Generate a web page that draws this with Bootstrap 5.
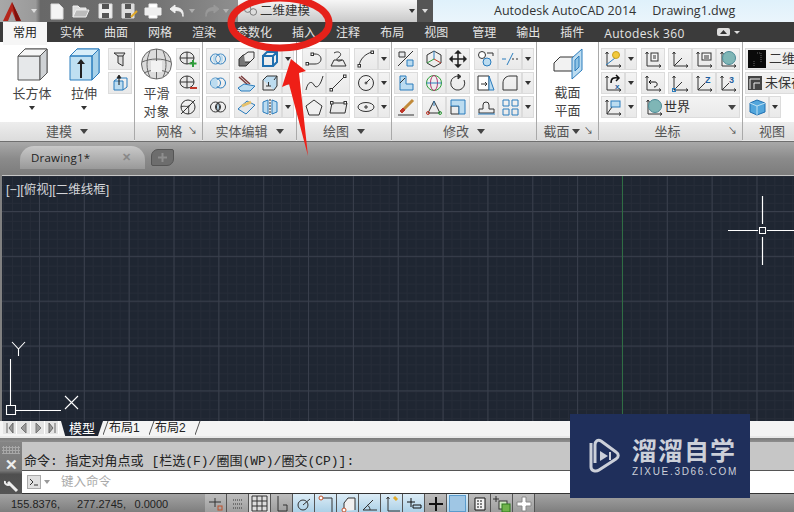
<!DOCTYPE html>
<html lang="zh">
<head>
    <meta charset="UTF-8">
    <title>Autodesk AutoCAD 2014</title>
    <link href="https://cdn.jsdelivr.net/npm/bootstrap@5.3.0/dist/css/bootstrap.min.css" rel="stylesheet">
    <style>
        html, body { width: 794px; height: 512px; overflow: hidden; }
        body { font-family: "Liberation Sans", "Noto Sans CJK SC", sans-serif; font-size: 12px; background: #808080; position: relative; }
        svg { display: block; fill: none; stroke: #333; stroke-width: 1; }
        .ac { stroke: #2a7cbd; }
        .fb { fill: #bcdcf0; }
        .fg { fill: #e4e6e8; }
        .fd { fill: #777; }
        /* title bar */
        .title-bar { height: 22px; background: linear-gradient(#dff1fb, #eaf5fc); }
        .qa-bar { width: 238px; padding-left: 2px; background: linear-gradient(90deg, #a8a8a8, #9a9a9a 15%, #686868 17%, #6f6f6f 60%, #8f8f8f); }
        .qa-btn { width: 24px; height: 22px; }
        .ws-combo { width: 179px; background: linear-gradient(#f6f6f6, #c9c9c9); color: #333; font-size: 12.5px; }
        .ws-icon { gap: 2px; padding-left: 5px; }
        .ws-drop { width: 16px; background: #555; }
        .app-name { font-family: "Open Sans", "Noto Sans", sans-serif; font-size: 12.5px; color: #333; margin-left: 61px; }
        .tri { display: inline-block; width: 0; height: 0; border-left: 3px solid transparent; border-right: 3px solid transparent; border-top: 4px solid #333; }
        .tri-w { border-top-color: #ddd; }
        .tri-lg { border-left-width: 4px; border-right-width: 4px; border-top-width: 5px; border-top-color: #444; }
        /* ribbon tabs */
        .rb-tabs { height: 20px; background: #3b3b3b; flex-wrap: nowrap; padding-left: 3px; }
        .rb-tabs .nav-link { padding: 0 10px; line-height: 23px; color: #e4e4e4; font-size: 12px; white-space: nowrap; }
        .rb-tabs .nav-link.is-on { background: #f6f6f6; color: #222; margin-right: 3px; }
        .rb-tabs .en { font-family: "Open Sans", sans-serif; font-size: 12px; letter-spacing: .35px; }
        .tab-push { margin-left: 4px; }
        .tab-view { margin-left: 22px; }
        /* ribbon */
        .rb-body { height: 99px; background: #fff; border-bottom: 1px solid #e8e8e8; }
        .rb-panel { border-right: 1px solid #a9a9a9; }
        .rb-main { height: 80px; padding-top: 6px; }
        .rb-title { height: 19px; background: linear-gradient(#ededed, #dcdcdc); color: #555; font-size: 13px; line-height: 19px; }
        .rb-launch { width: 14px; font-size: 9px; color: #444; }
        .w-jm { width: 135px; } .w-wg { width: 68px; } .w-st { width: 94px; } .w-ht { width: 95px; }
        .w-xg { width: 145px; } .w-jp { width: 62px; } .w-zb { width: 144px; } .w-vw { width: 51px; border-right: 0; overflow: hidden; }
        .pl-a { padding-left: 2px; } .pl-b { padding-left: 3px; } .pl-c { padding-left: 5px; } .pl-d { padding-left: 6px; }
        .tool-stack { display: flex; flex-direction: column; gap: 2px; }
        .tool { width: 24px; height: 22px; background: linear-gradient(#f4f4f4, #e9e9e9); box-shadow: inset 0 0 0 1px #dcdcdc; display: flex; align-items: center; justify-content: center; flex: none; }
        .tool-d { width: 12px; height: 22px; background: linear-gradient(#f4f4f4, #e9e9e9); box-shadow: inset 0 0 0 1px #dcdcdc; display: flex; align-items: center; justify-content: center; flex: none; }
        .tool-wide { width: 99px; justify-content: flex-start; padding-left: 3px; color: #333; font-size: 13px; }
        .tool-cb { width: 62px; justify-content: flex-start; padding-left: 3px; gap: 3px; color: #333; font-size: 13px; white-space: nowrap; overflow: hidden; }
        .gap-3px { margin-left: 3px; }
        .big-tool { width: 48px; flex: none; color: #444; font-size: 13px; line-height: 17px; text-align: center; white-space: nowrap; }
        .big-first { margin-left: 8px; }
        .sec-lbl { line-height: 18px; color: #444; font-size: 13px; text-align: center; }
        /* drawing tabs */
        .file-bar { height: 34px; background: linear-gradient(#a9a9a9, #8b8b8b 50%, #7c7c7c); padding: 4px 0 0 20px; border-top: 1px solid #6f6f6f; }
        .file-tab { width: 125px; height: 23px; background: linear-gradient(#c9c9c9, #999); border-radius: 14px 14px 0 0; color: #222; font-size: 11.5px; letter-spacing: .2px; padding: 0 14px 0 11px; font-family: "Open Sans", sans-serif; }
        .file-x { color: #888; font-weight: 700; font-size: 11px; }
        .file-add { width: 23px; height: 17px; background: #6d6d6d; border: 1px solid #555; border-radius: 7px 2px 7px 2px; margin: 3px 0 0 6px; }
        /* canvas */
        .model-view { height: 246px; margin-left: 2px; position: relative; overflow: hidden; border-top: 1px solid #c6c6c6; background-color: #1f2632;
            background-image: linear-gradient(90deg, #393f4c 1px, transparent 1px), linear-gradient(#393f4c 1px, transparent 1px), linear-gradient(90deg, #262c38 1px, transparent 1px), linear-gradient(#262c38 1px, transparent 1px);
            background-size: 44.85px 44.85px, 44.85px 44.85px, 8.97px 8.97px, 8.97px 8.97px;
            background-position: 37px 35px, 37px 35px, 1px 0, 1px 0; }
        .view-lbl { position: absolute; left: 4px; top: 5px; color: #d4d6da; font-size: 12.5px; white-space: nowrap; }
        .view-art { position: absolute; left: -2px; top: -1px; stroke: #fff; }
        /* layout tabs */
        .layout-bar { height: 15px; background: #f4f4f4; padding-left: 3px; }
        .lay-nav { width: 14px; height: 13px; display: flex; align-items: center; justify-content: center; background: #e4e4e4; border-right: 1px solid #fff; }
        .lay-tab { color: #222; font-size: 12px; line-height: 15px; width: 46px; display: flex; white-space: nowrap; font-family: "Liberation Sans", "Noto Sans CJK SC", sans-serif; }
        .lay-slash { width: 6px; flex: none; stroke: #555; }
        .lay-tab-on { background: #1f2632; color: #fff; width: 42px; margin-left: 2px; clip-path: polygon(0 0, 100% 0, 88% 100%, 10% 100%); font-size: 13px; justify-content: center; }
        .band-a { height: 2px; background: #e9e9e9; }
        .band-b { height: 4px; background: linear-gradient(#7b7b7b, #8d8d8d); }
        /* command line */
        .cmd-shell { height: 52px; }
        .cmd-grip { width: 22px; height: 52px; overflow: hidden; background: linear-gradient(#858585, #777 55%, #4f4f4f 62%, #555); }
        .grip-dots { height: 8px; margin: 4px 2px 0; background-image: radial-gradient(#a8a8a8 1px, transparent 1.2px); background-size: 3px 3px; }
        .cmd-x { color: #eee; font-size: 15px; font-weight: 700; line-height: 15px; margin-top: 3px; }
        .cmd-wrench { margin-top: 6px; }
        .cmd-out { height: 29px; background: #c6c6c6; border-bottom: 1px solid #555; font-family: "Liberation Mono", "Noto Sans CJK SC", monospace; font-size: 13px; color: #222; padding: 11px 0 0 2px; line-height: 17px; white-space: pre; }
        .cmd-in { height: 23px; background: #fff; border-bottom: 1px solid #333; padding-left: 5px; color: #aaa; font-size: 12.5px; gap: 3px; }
        .cmd-prompt { width: 14px; height: 14px; background: #e0e0e0; border: 1px solid #aaa; }
        /* status bar */
        .status-bar { height: 19px; background: linear-gradient(#a3a3a3, #7c7c7c); }
        .coords { width: 205px; padding-left: 11px; font-size: 11px; color: #222; white-space: pre; word-spacing: 5.5px; line-height: 20px; }
        .st-btn { width: 22px; height: 19px; border-right: 1px solid #555; background: linear-gradient(#bdbdbd, #9c9c9c); display: flex; align-items: center; justify-content: center; overflow: hidden; }
        .st-on { background: linear-gradient(#dcecf6, #a9cfe6); }
        .st-hi { background: #dcdcdc; }
        /* over the page */
        .mark-up { position: absolute; left: 0; top: 0; z-index: 5; }
        .logo-box { position: absolute; left: 570px; top: 414px; width: 180px; height: 84px; background: #1f2f5b; z-index: 6; color: #ccd0d9; }
        .logo-txt { margin-left: 12px; }
        .logo-zh { font-family: "Noto Sans CJK SC", sans-serif; font-size: 25px; line-height: 28px; font-weight: 700; letter-spacing: 1px; white-space: nowrap; }
        .logo-en { font-family: "Liberation Sans", sans-serif; font-size: 10px; line-height: 11px; letter-spacing: 1.7px; margin-top: 3px; white-space: nowrap; }
    </style>
</head>
<body>
    <svg width="0" height="0" class="position-absolute">
        <defs>
            <g id="axis"><path d="M4 2v14h14M4 2l-1.500 2M4 2l1.500 2M18 16l-2-1.500M18 16l-2 1.500"/></g>
            <g id="rings"><circle cx="7.500" cy="9" r="5" class="ac"/><circle cx="12.500" cy="9" r="5" class="ac"/></g>
        </defs>
    </svg>

    <!-- title bar -->
    <div class="title-bar d-flex align-items-stretch">
        <div class="qa-bar d-flex align-items-center">
            <svg width="21" height="20" viewBox="0 0 21 20" style="stroke:none"><path d="M1 20 10 1l9 19h-5l-4-10-4 10z" fill="#b5261c"/><path d="M10 1l9 19h-5z" fill="#7f120c"/></svg>
            <span class="tri tri-w ms-2 me-2"></span>
            <span class="qa-btn d-flex align-items-center justify-content-center"><svg width="16" height="17" viewBox="0 0 16 17"><path d="M2 1h8l4 4v11H2z" fill="#f4f4f4" stroke="#ddd"/></svg></span>
            <span class="qa-btn d-flex align-items-center justify-content-center"><svg width="18" height="16" viewBox="0 0 18 16"><path d="M1 14V3h5l2 2h6v2" fill="#ddd" stroke="#eee"/><path d="M1 14l3-7h13l-3 7z" fill="#bbb" stroke="#eee"/></svg></span>
            <span class="qa-btn d-flex align-items-center justify-content-center"><svg width="15" height="16" viewBox="0 0 15 16"><path d="M1 1h13v14H1z" fill="#eee" stroke="#ddd"/><path d="M4 1h7v5H4zM4 10h7v5H4z" fill="#555" stroke="none"/></svg></span>
            <span class="qa-btn d-flex align-items-center justify-content-center"><svg width="17" height="16" viewBox="0 0 17 16"><path d="M1 1h12v14H1z" fill="#ddd" stroke="#ddd"/><path d="M4 1h6v5H4zM4 10h6v5H4z" fill="#555" stroke="none"/><path d="M10 14l6-6" stroke="#e0a92a" stroke-width="2"/></svg></span>
            <span class="qa-btn d-flex align-items-center justify-content-center"><svg width="18" height="16" viewBox="0 0 18 16"><path d="M5 1h8v4H5zM5 11h8v4H5z" fill="#fff" stroke="#eee"/><path d="M1 5h16v7H1z" fill="#eee" stroke="#eee"/></svg></span>
            <span class="qa-btn d-flex align-items-center justify-content-center"><svg width="17" height="14" viewBox="0 0 17 14"><path d="M6 1 1 5l5 4V6.500c5 0 7 1 8 6 1-6-2-9-8-9z" fill="#eee" stroke="#eee"/></svg></span>
            <span class="tri tri-w" style="opacity:.5"></span>
            <span class="qa-btn d-flex align-items-center justify-content-center ms-1"><svg width="17" height="14" viewBox="0 0 17 14"><path d="M11 1l5 4-5 4V6.500c-5 0-7 1-8 6-1-6 2-9 8-9z" fill="#999" stroke="#999"/></svg></span>
            <span class="tri tri-w" style="opacity:.5"></span>
        </div>
        <div class="ws-combo d-flex align-items-center justify-content-between">
            <span class="d-flex align-items-center ws-icon">
                <svg width="15" height="14" viewBox="0 0 16 14" style="stroke:#777"><circle cx="5" cy="5" r="3.500" fill="#ddd"/><circle cx="11" cy="8" r="3.500" fill="#ddd"/></svg>二维建模
            </span>
            <span class="tri" style="margin-right:2px"></span>
        </div>
        <div class="ws-drop d-flex align-items-center justify-content-center"><span class="tri tri-w"></span></div>
        <div class="app-name d-flex align-items-center gap-3"><span>Autodesk AutoCAD 2014</span><span>Drawing1.dwg</span></div>
    </div>

    <!-- ribbon tabs -->
    <ul class="nav rb-tabs">
        <li class="nav-item"><a class="nav-link is-on" href="#">常用</a></li>
        <li class="nav-item"><a class="nav-link" href="#">实体</a></li>
        <li class="nav-item"><a class="nav-link" href="#">曲面</a></li>
        <li class="nav-item"><a class="nav-link" href="#">网格</a></li>
        <li class="nav-item"><a class="nav-link" href="#">渲染</a></li>
        <li class="nav-item"><a class="nav-link" href="#">参数化</a></li>
        <li class="nav-item"><a class="nav-link" href="#">插入</a></li>
        <li class="nav-item"><a class="nav-link" href="#">注释</a></li>
        <li class="nav-item"><a class="nav-link" href="#">布局</a></li>
        <li class="nav-item"><a class="nav-link" href="#">视图</a></li>
        <li class="nav-item tab-push"><a class="nav-link" href="#">管理</a></li>
        <li class="nav-item"><a class="nav-link" href="#">输出</a></li>
        <li class="nav-item"><a class="nav-link" href="#">插件</a></li>
        <li class="nav-item"><a class="nav-link en" href="#">Autodesk 360</a></li>
        <li class="nav-item d-flex align-items-center gap-1 tab-view"><svg width="13" height="8" viewBox="0 0 13 8" style="stroke:none"><rect width="13" height="8" rx="2" fill="#ddd"/><path d="M3 6l3.500-4L10 6z" fill="#333"/></svg><span class="tri tri-w" style="border-top-width:3px"></span></li>
    </ul>

    <!-- ribbon panels -->
    <div class="rb-body d-flex">
        <!-- 建模 -->
        <section class="rb-panel w-jm">
            <div class="rb-main d-flex">
                <div class="big-tool big-first d-flex flex-column align-items-center">
                    <svg width="31" height="33" viewBox="0 0 31 33" style="stroke:#555"><path d="M1 8 8 1h22v24l-7 7H1z" fill="#e6e8ea"/><path d="M1 8h22v24" fill="none"/><path d="M23 8l7-7v24l-7 7z" fill="#cfd2d5"/><path d="M1 8 8 1h22l-7 7z" fill="#f6f6f6"/></svg>
                    <span class="mt-1">长方体</span><span class="tri mt-1"></span>
                </div>
                <div class="big-tool ms-1 d-flex flex-column align-items-center">
                    <svg width="31" height="33" viewBox="0 0 31 33" style="stroke:#2a7cbd"><path d="M1 8 8 1h22v24l-7 7H1z" fill="#bfe0f2"/><path d="M23 8l7-7v24l-7 7z" fill="#a9d2e9"/><path d="M1 8 8 1h22l-7 7z" fill="#d8eef9"/><path d="M1 8h22v24" fill="none"/><path d="M12 30V15" stroke="#222" stroke-width="2"/><path d="M8 16l4-5 4 5z" fill="#222" stroke="none"/></svg>
                    <span class="mt-1">拉伸</span><span class="tri mt-1"></span>
                </div>
                <div class="tool-stack">
                    <span class="tool"><svg width="16" height="17" viewBox="0 0 16 17"><path d="M2 2h11l-2 3v10L6 12V5z" fill="#ddd"/><path d="M6 5h5"/></svg></span>
                    <span class="tool"><svg width="18" height="18" viewBox="0 0 18 18"><path d="M3 7h9v9H3z" class="ac fb"/><path d="M3 7l4-3h9v9l-4 3" class="ac"/><path d="M8 11V2" stroke="#111"/><path d="M6 4l2-3 2 3z" fill="#111"/></svg></span>
                </div>
            </div>
            <div class="rb-title d-flex justify-content-center align-items-center gap-2"><span>建模</span><span class="tri tri-lg"></span></div>
        </section>
        <!-- 网格 -->
        <section class="rb-panel w-wg">
            <div class="rb-main d-flex pl-d">
                <div class="d-flex flex-column align-items-center" style="width:31px">
                    <svg width="31" height="33" viewBox="0 0 31 33" style="stroke:#666"><circle cx="15.500" cy="16" r="15" fill="#dcdcdc"/><path d="M1 14c9-4 20-4 29 0M3 25c8-4 17-4 25 0M15.500 1v30M9 3c-4 9-4 18 0 26M22 3c4 9 4 18 0 26"/><path d="M10 13h11v11H10z" fill="#f2f2f2" stroke="none"/></svg>
                    <span class="sec-lbl mt-1">平滑</span><span class="sec-lbl">对象</span>
                </div>
                <div class="tool-stack ms-1">
                    <span class="tool"><svg width="19" height="18" viewBox="0 0 19 18"><ellipse cx="8" cy="8" rx="7" ry="6" fill="#e8e8e8"/><path d="M1 8h14M8 2v12"/><path d="M14 10v7M10.500 13.500h7" stroke="#2e9e3a" stroke-width="2"/></svg></span>
                    <span class="tool"><svg width="19" height="18" viewBox="0 0 19 18"><ellipse cx="8" cy="8" rx="7" ry="6" fill="#e8e8e8"/><path d="M1 8h14M8 2v12"/><path d="M11 14h7" stroke="#c0392b" stroke-width="2"/></svg></span>
                    <span class="tool"><svg width="18" height="18" viewBox="0 0 18 18"><circle cx="9" cy="9" r="7"/><path d="M2 16 16 2M2 9c3-2 6 1 9-2M9 16c2-3-1-6 2-9"/></svg></span>
                </div>
            </div>
            <div class="rb-title d-flex align-items-center ps-3"><span class="flex-fill text-center">网格</span><span class="rb-launch">↘</span></div>
        </section>
        <!-- 实体编辑 -->
        <section class="rb-panel w-st">
            <div class="rb-main tool-stack pl-b">
                <div class="d-flex">
                    <span class="tool"><svg width="20" height="18" viewBox="0 0 20 18"><use href="#rings"/><path d="M7.500 4c-3 1-4 7 0 10M12.500 4c3 1 4 7 0 10" fill="#bcdcf0" stroke="none"/></svg></span>
                    <span class="tool ms-1"><svg width="18" height="17" viewBox="0 0 18 17"><path d="M2 8l4-4h7v7l-4 4H2z" fill="#777"/><path d="M7 4l4-3h6v6l-4 4H8" fill="#eee"/></svg></span>
                    <span class="tool"><svg width="18" height="18" viewBox="0 0 18 18" style="stroke:#1f6fb0;stroke-width:2"><path d="M2 6h10v10H2zM2 6l4-4h10v10l-4 4M12 6l4-4"/></svg></span>
                    <span class="tool-d"><span class="tri"></span></span>
                </div>
                <div class="d-flex">
                    <span class="tool"><svg width="20" height="18" viewBox="0 0 20 18"><use href="#rings"/><path d="M5 5c-3 2-3 6 0 8l2.500 1c3-2 3-8 0-10z" fill="#bcdcf0" stroke="none"/></svg></span>
                    <span class="tool ms-1"><svg width="19" height="17" viewBox="0 0 19 17"><path d="M2 2l9 8M4 1l9 8" stroke="#7a3b3b" stroke-width="1.500"/><path d="M1 13l6-4 11 2-5 5H4z" class="ac fb"/></svg></span>
                    <span class="tool"><svg width="18" height="18" viewBox="0 0 18 18"><path d="M2 6h11v10H2z" class="fg"/><path d="M2 6l4-4h10v10l-3 4M13 6l3-4" class="fb"/><path d="M5 12h5M7.500 12V8"/></svg></span>
                    <span class="tool-d"><span class="tri"></span></span>
                </div>
                <div class="d-flex">
                    <span class="tool"><svg width="20" height="18" viewBox="0 0 20 18"><circle cx="7.500" cy="9" r="5"/><circle cx="12.500" cy="9" r="5"/><path d="M10 5c-2 2-2 6 0 8 2-2 2-6 0-8z" class="fb"/></svg></span>
                    <span class="tool ms-1"><svg width="19" height="16" viewBox="0 0 19 16"><path d="M1 10 10 2l8 4-9 9z" class="ac fg"/><path d="M5 7l9-4" stroke="#e6c06a" stroke-width="3"/></svg></span>
                    <span class="tool"><svg width="18" height="18" viewBox="0 0 18 18"><path d="M9 1v16" stroke-dasharray="2 1"/><path d="M2 4l5-2v14l-5-2zM16 4l-5-2v14l5-2z" class="ac fb"/></svg></span>
                    <span class="tool-d"><span class="tri"></span></span>
                </div>
            </div>
            <div class="rb-title d-flex justify-content-center align-items-center gap-2"><span>实体编辑</span><span class="tri tri-lg"></span></div>
        </section>
        <!-- 绘图 -->
        <section class="rb-panel w-ht">
            <div class="rb-main tool-stack pl-c">
                <div class="d-flex">
                    <span class="tool"><svg width="19" height="16" viewBox="0 0 19 16"><path d="M2 13h8c8 0 8-10 0-10H7" /><rect x="1" y="11.500" width="2.500" height="2.500" fill="#fff"/><rect x="6" y="2" width="2.500" height="2.500" fill="#fff"/></svg></span>
                    <span class="tool"><svg width="19" height="18" viewBox="0 0 19 18"><path d="M5 3c5-3 9 1 5 4-4 2-2 6 3 3M2 16l3-6h9l3 6z"/></svg></span>
                    <span class="tool ms-1"><svg width="18" height="18" viewBox="0 0 18 18"><path d="M2 16C3 9 8 4 15 2"/><rect x="1" y="14.500" width="2.500" height="2.500" fill="#fff"/><rect x="14" y="1" width="2.500" height="2.500" fill="#fff"/></svg></span>
                    <span class="tool-d"><span class="tri"></span></span>
                </div>
                <div class="d-flex">
                    <span class="tool"><svg width="19" height="18" viewBox="0 0 19 18" stroke-width="1.500"><path d="M1 16C3 7 7 7 9 11s6 2 9-9"/></svg></span>
                    <span class="tool"><svg width="18" height="18" viewBox="0 0 18 18"><path d="M2 16 16 2"/><rect x="1" y="14.500" width="2.500" height="2.500" fill="#fff"/><rect x="14.500" y="1" width="2.500" height="2.500" fill="#fff"/></svg></span>
                    <span class="tool ms-1"><svg width="18" height="18" viewBox="0 0 18 18"><circle cx="9" cy="9" r="7.500"/><path d="M9 9l4-4"/><circle cx="9" cy="9" r="1"/></svg></span>
                    <span class="tool-d"><span class="tri"></span></span>
                </div>
                <div class="d-flex">
                    <span class="tool"><svg width="18" height="17" viewBox="0 0 18 17"><path d="M9 1l8 6-3 9H4L1 7z" fill="#f0f0f0"/></svg></span>
                    <span class="tool"><svg width="19" height="15" viewBox="0 0 19 15"><path d="M3 3h15l-2 10H1z" fill="#e8e8e8"/><rect x="1.500" y="1.500" width="2.500" height="2.500" fill="#fff"/><rect x="15" y="1.500" width="2.500" height="2.500" fill="#fff"/></svg></span>
                    <span class="tool ms-1"><svg width="18" height="14" viewBox="0 0 18 14"><ellipse cx="9" cy="7" rx="8" ry="4.500"/><path d="M7 7h4M9 5v4"/></svg></span>
                    <span class="tool-d"><span class="tri"></span></span>
                </div>
            </div>
            <div class="rb-title d-flex justify-content-center align-items-center gap-2"><span>绘图</span><span class="tri tri-lg"></span></div>
        </section>
        <!-- 修改 -->
        <section class="rb-panel w-xg">
            <div class="rb-main tool-stack pl-a">
                <div class="d-flex">
                    <span class="tool"><svg width="18" height="18" viewBox="0 0 18 18"><path d="M1 16 16 1"/><path d="M2 2h6v5H2z" class="fg"/><path d="M10 10h6v6h-6z" class="ac fb"/></svg></span>
                    <span class="tool ms-1"><svg width="18" height="18" viewBox="0 0 18 18"><path d="M9 1l7 4v8l-7 4-7-4V5z"/><path d="M9 9V1" stroke="#2a7cbd"/><path d="M9 9l-7 4" stroke="#2e9e3a"/><path d="M9 9l7 4" stroke="#c0392b"/></svg></span>
                    <span class="tool"><svg width="18" height="18" viewBox="0 0 18 18" style="stroke:#222;stroke-width:1.500"><path d="M9 2v14M2 9h14M9 1l-2 2h4zM9 17l-2-2h4zM1 9l2-2v4zM17 9l-2-2v4z"/></svg></span>
                    <span class="tool ms-1"><svg width="18" height="18" viewBox="0 0 18 18"><circle cx="5" cy="5" r="3.500" fill="#fff"/><circle cx="10" cy="12" r="4" class="ac fb"/><path d="M10 3h6v3"/></svg></span>
                    <span class="tool"><svg width="18" height="16" viewBox="0 0 18 16"><path d="M1 8h4M6 14l6-12" class="ac"/><path d="M11 8h2M15 8h2" /></svg></span>
                    <span class="tool-d"><span class="tri"></span></span>
                </div>
                <div class="d-flex">
                    <span class="tool"><svg width="18" height="18" viewBox="0 0 18 18"><path d="M3 2h6v8h7v6H3z" class="ac fb"/><path d="M3 9l5-5"/></svg></span>
                    <span class="tool ms-1"><svg width="18" height="18" viewBox="0 0 18 18"><circle cx="9" cy="9" r="7.500" stroke="#2e9e3a"/><ellipse cx="9" cy="9" rx="3.500" ry="7.500" stroke="#b3356b"/><path d="M1.500 9h15" stroke="#2a7cbd"/></svg></span>
                    <span class="tool"><svg width="18" height="18" viewBox="0 0 18 18" stroke-width="1.500"><path d="M15 6a7 7 0 1 1-4-3.500"/><path d="M9 0l3 2.500L9 5z" fill="#333"/></svg></span>
                    <span class="tool ms-1"><svg width="18" height="18" viewBox="0 0 18 18"><path d="M1 2h11v14H1z" fill="#fff"/><path d="M12 2l5 14h-5z" class="ac fb"/><path d="M4 10h6M8 8l2 2-2 2"/></svg></span>
                    <span class="tool"><svg width="18" height="18" viewBox="0 0 18 18"><path d="M2 16V9c0-4 3-7 7-7h7v14z"/></svg></span>
                    <span class="tool-d"><span class="tri"></span></span>
                </div>
                <div class="d-flex">
                    <span class="tool"><svg width="18" height="18" viewBox="0 0 18 18"><path d="M7 11 16 2" stroke="#c08a3a" stroke-width="3"/><path d="M3 13l3-3 2 2-3 3z" fill="#c0392b" stroke="#c0392b"/><path d="M1 17h16"/></svg></span>
                    <span class="tool ms-1"><svg width="18" height="16" viewBox="0 0 18 16"><path d="M9 2 3 14h12z"/><path d="M9 2v5" stroke="#2a7cbd"/><circle cx="3" cy="14" r="1.500" stroke="#c0392b"/><circle cx="15" cy="14" r="1.500" stroke="#2e9e3a"/></svg></span>
                    <span class="tool"><svg width="18" height="18" viewBox="0 0 18 18"><path d="M2 8h8v8H2z"/><path d="M2 2h14v14h-6V8H2z" class="ac fb"/></svg></span>
                    <span class="tool ms-1"><svg width="19" height="16" viewBox="0 0 19 16" stroke-width="1.500"><path d="M2 14h15v-4h-5V6a3 3 0 0 0-6 0v4H2z"/><path d="M1 15h17" class="ac"/></svg></span>
                    <span class="tool"><svg width="17" height="17" viewBox="0 0 17 17"><path d="M1 1h6v6H1zM10 1h6v6h-6zM1 10h6v6H1zM10 10h6v6h-6z" class="ac"/></svg></span>
                    <span class="tool-d"><span class="tri"></span></span>
                </div>
            </div>
            <div class="rb-title d-flex justify-content-center align-items-center gap-2"><span>修改</span><span class="tri tri-lg"></span></div>
        </section>
        <!-- 截面 -->
        <section class="rb-panel w-jp">
            <div class="rb-main d-flex flex-column align-items-center">
                <svg width="30" height="32" viewBox="0 0 30 32"><path d="M1 15l6-6h14v14H1z" fill="#f2f2f2"/><path d="M19 10 29 1v21l-10 9z" class="ac fb" stroke="#555"/><path d="M22 12l4-4v11l-4 4z" fill="#8ec3e4" stroke="#2a7cbd"/></svg>
                <span class="sec-lbl mt-1">截面</span><span class="sec-lbl">平面</span>
            </div>
            <div class="rb-title d-flex align-items-center ps-1"><span class="flex-fill text-center">截面</span><span class="tri tri-lg"></span><span class="rb-launch ms-1">↘</span></div>
        </section>
        <!-- 坐标 -->
        <section class="rb-panel w-zb">
            <div class="rb-main tool-stack pl-a">
                <div class="d-flex">
                    <span class="tool"><svg width="20" height="18" viewBox="0 0 20 18"><use href="#axis"/><path d="M3 15 12 8" class="ac"/><circle cx="13" cy="5" r="3.500" fill="#f2c93b" stroke="#c9a020"/></svg></span>
                    <span class="tool-d"><span class="tri"></span></span>
                    <span class="tool ms-1"><svg width="20" height="18" viewBox="0 0 20 18"><use href="#axis"/><rect x="8" y="3" width="7" height="8" fill="#f4f4f4"/><path d="M10 6h3M10 8h3"/></svg></span>
                    <span class="tool gap-3px"><svg width="20" height="18" viewBox="0 0 20 18"><use href="#axis"/><path d="M4 16 12 8"/></svg></span>
                    <span class="tool"><svg width="20" height="18" viewBox="0 0 20 18"><use href="#axis"/><rect x="8" y="3" width="9" height="7" fill="#f4f4f4"/><path d="M10 6h5M10 8h5"/></svg></span>
                    <span class="tool"><svg width="20" height="18" viewBox="0 0 20 18"><use href="#axis"/><circle cx="11" cy="8" r="6.500" fill="#7fb6b6" stroke="#4b8a96"/></svg></span>
                </div>
                <div class="d-flex">
                    <span class="tool"><svg width="20" height="18" viewBox="0 0 20 18"><use href="#axis"/><path d="M8 9c0-5 3-6 7-5M13 1l3 3-3 3" stroke="#111" stroke-width="1.500"/><text x="12" y="15" font-size="8" font-weight="700" fill="#1f5f9e" stroke="none">x</text></svg></span>
                    <span class="tool-d"><span class="tri"></span></span>
                    <span class="tool ms-1"><svg width="20" height="18" viewBox="0 0 20 18"><use href="#axis"/><path d="M8 6l-2 2 2 2M6 8h6c3 0 3 5-1 5" stroke="#111"/></svg></span>
                    <span class="tool gap-3px"><svg width="20" height="18" viewBox="0 0 20 18"><use href="#axis"/><path d="M4 16 12 8"/><rect x="2.500" y="14.500" width="3" height="3" class="ac"/></svg></span>
                    <span class="tool"><svg width="20" height="18" viewBox="0 0 20 18"><use href="#axis"/><path d="M4 16l7-7"/><text x="11" y="9" font-size="9" font-weight="700" fill="#1f5f9e" stroke="none">Z</text></svg></span>
                    <span class="tool"><svg width="20" height="18" viewBox="0 0 20 18"><use href="#axis"/><path d="M4 16l7-7"/><text x="11" y="9" font-size="9" font-weight="700" fill="#1f5f9e" stroke="none">3</text></svg></span>
                </div>
                <div class="d-flex">
                    <span class="tool"><svg width="20" height="18" viewBox="0 0 20 18"><use href="#axis"/><path d="M4 16 9 9"/><rect x="8" y="3" width="9" height="6" class="ac fb"/></svg></span>
                    <span class="tool-d"><span class="tri"></span></span>
                    <span class="tool tool-wide ms-1"><svg width="20" height="18" viewBox="0 0 20 18"><use href="#axis"/><circle cx="11" cy="8" r="6.500" fill="#7fb6b6" stroke="#4b8a96"/></svg>世界<span class="tri tri-lg ms-auto me-1"></span></span>
                </div>
            </div>
            <div class="rb-title d-flex align-items-center ps-2"><span class="flex-fill text-center">坐标</span><span class="rb-launch">↘</span></div>
        </section>
        <!-- 视图 -->
        <section class="rb-panel w-vw">
            <div class="rb-main tool-stack pl-a">
                <span class="tool tool-cb"><svg width="18" height="18" viewBox="0 0 18 18" style="stroke:#666;flex:none"><rect width="18" height="18" fill="#0a0a0a" stroke="none"/><path d="M6 16v-5M13 12V3H8" stroke-dasharray="1 1"/></svg>二维线框</span>
                <span class="tool tool-cb"><svg width="14" height="14" viewBox="0 0 14 14" style="stroke:#eee;flex:none"><rect width="14" height="14" fill="#444" stroke="none"/><path d="M2 13V3h10M6 13V7h6"/></svg>未保存视图</span>
                <div class="d-flex">
                    <span class="tool"><svg width="17" height="17" viewBox="0 0 17 17"><path d="M1 4l7-3 8 3v9l-8 3-7-3z" fill="#52a6dc" stroke="#1f6fb0"/><path d="M8 7v9M1 4l7 3 8-3" stroke="#bfe0f2"/></svg></span>
                    <span class="tool-d"><span class="tri"></span></span>
                </div>
            </div>
            <div class="rb-title ps-3 text-nowrap">视图</div>
        </section>
    </div>

    <!-- document tabs -->
    <div class="file-bar d-flex align-items-start">
        <div class="file-tab d-flex align-items-center justify-content-between"><span>Drawing1*</span><span class="file-x">✕</span></div>
        <div class="file-add d-flex align-items-center justify-content-center"><svg width="9" height="9" viewBox="0 0 9 9" style="stroke:#8e8e8e;stroke-width:2"><path d="M4.500 0v9M0 4.500h9"/></svg></div>
    </div>

    <!-- model space -->
    <div class="model-view">
        <div class="view-lbl">[−][俯视][二维线框]</div>
        <svg class="view-art" width="794" height="246" viewBox="0 176 794 246">
            <path d="M622.500 176v246" stroke="#2f6e44"/>
            <path d="M762.500 197v28M762.500 238v28M728 231.500h30M767 231.500h27" stroke-width="1.200"/>
            <rect x="759.500" y="228.500" width="6" height="6"/>
            <path d="M10.500 360v46M15 411.500h46M6.500 406.500h9v9h-9zM65 397l13 13M78 397l-13 13M12 343l6.500 7 6.500-7M18.500 350v7" stroke-width="1.100"/>
        </svg>
    </div>

    <!-- layout tabs -->
    <div class="layout-bar d-flex align-items-start">
        <span class="lay-nav"><svg width="8" height="10" viewBox="0 0 8 10" style="stroke:#666"><path d="M1 0v10M7 0 3 5l4 5z" fill="#999"/></svg></span>
        <span class="lay-nav"><svg width="8" height="10" viewBox="0 0 8 10" style="stroke:#777"><path d="M6 0 1 5l5 5z" fill="#999"/></svg></span>
        <span class="lay-nav"><svg width="8" height="10" viewBox="0 0 8 10" style="stroke:#777"><path d="M2 0l5 5-5 5z" fill="#999"/></svg></span>
        <span class="lay-nav"><svg width="8" height="10" viewBox="0 0 8 10" style="stroke:#666"><path d="M7 0v10M1 0l4 5-4 5z" fill="#999"/></svg></span>
        <span class="lay-tab lay-tab-on">模型</span>
        <span class="lay-tab"><svg class="lay-slash" width="6" height="15" viewBox="0 0 6 15"><path d="M0 14 5 0"/></svg>布局1</span>
        <span class="lay-tab"><svg class="lay-slash" width="6" height="15" viewBox="0 0 6 15"><path d="M0 14 5 0"/></svg>布局2</span>
        <svg class="lay-slash" width="6" height="15" viewBox="0 0 6 15"><path d="M0 14 5 0"/></svg>
    </div>
    <div class="band-a"></div>
    <div class="band-b"></div>

    <!-- command line -->
    <div class="d-flex cmd-shell">
        <div class="cmd-grip d-flex flex-column">
            <div class="grip-dots"></div>
            <div class="text-center cmd-x">✕</div>
            <svg class="mx-auto cmd-wrench" width="15" height="15" viewBox="0 0 15 15" style="stroke:#eee;stroke-width:3"><path d="M4 4l9 9"/><path d="M1 3a3 3 0 0 0 5 3" stroke-width="2"/></svg>
        </div>
        <div class="flex-fill">
            <div class="cmd-out">命令: 指定对角点或 [栏选(F)/圈围(WP)/圈交(CP)]:</div>
            <div class="cmd-in d-flex align-items-center">
                <span class="cmd-prompt d-flex align-items-center justify-content-center"><svg width="10" height="8" viewBox="0 0 10 8"><path d="M1 1l3 3-3 3M5 7h4"/></svg></span>
                <span class="tri" style="border-top-color:#999"></span>
                <span class="ms-2">键入命令</span>
            </div>
        </div>
    </div>

    <!-- status bar -->
    <div class="status-bar d-flex">
        <div class="coords">155.8376,  277.2745, 0.0000</div>
        <span class="st-btn"><svg width="16" height="14" viewBox="0 0 16 14"><path d="M7 1v9M1 5h12"/><rect x="10" y="9" width="4" height="4" stroke="#c0502b"/></svg></span>
        <span class="st-btn"><svg width="14" height="12" viewBox="0 0 14 12"><path d="M2 2h10M2 6h10M2 10h10" stroke-dasharray="1 1"/></svg></span>
        <span class="st-btn st-hi"><svg width="17" height="17" viewBox="0 0 17 17"><path d="M1 1h15v15H1zM1 6h15M1 11h15M6 1v15M11 1v15"/></svg></span>
        <span class="st-btn"><svg width="14" height="17" viewBox="0 0 14 17"><path d="M3 1v15h9v-6H8"/></svg></span>
        <span class="st-btn st-on"><svg width="16" height="14" viewBox="0 0 16 14"><circle cx="7" cy="8" r="5"/><path d="M7 8l7-6"/></svg></span>
        <span class="st-btn st-on"><svg width="16" height="17" viewBox="0 0 16 17"><path d="M3 3h11v14"/><circle cx="3" cy="3" r="2" stroke="#c0502b" fill="#fff"/></svg></span>
        <span class="st-btn st-on"><svg width="16" height="17" viewBox="0 0 16 17"><path d="M4 16V8l4-5h7v12" fill="#f0f0f0"/><circle cx="4" cy="15" r="2" stroke="#c0502b" fill="#fff"/></svg></span>
        <span class="st-btn st-on"><svg width="16" height="14" viewBox="0 0 16 14"><path d="M1 13h14M1 13 11 3M8 13c0-2-1-4-3-5"/></svg></span>
        <span class="st-btn st-on"><svg width="16" height="17" viewBox="0 0 16 17"><use href="#axis"/><path d="M10 2l3 3" stroke="#e0a92a" stroke-width="3"/></svg></span>
        <span class="st-btn st-on"><svg width="16" height="14" viewBox="0 0 16 14" style="stroke:#111"><path d="M5 1v9M1 5h8"/><path d="M7 8h8v3H7z"/></svg></span>
        <span class="st-btn"><svg width="16" height="16" viewBox="0 0 16 16" style="stroke:#111;stroke-width:2"><path d="M8 1v14M1 8h14"/></svg></span>
        <span class="st-btn st-on"><svg width="17" height="17" viewBox="0 0 17 17" style="stroke:#5a9bcc"><rect x=".5" y=".5" width="16" height="16" fill="#9fc6e4"/></svg></span>
        <span class="st-btn"><svg width="12" height="14" viewBox="0 0 12 14" style="stroke:#111"><path d="M1 1h10v12H1z" fill="#f2f2f2"/><path d="M3 4h6M3 7h6M3 10h6" stroke-dasharray="2 1"/></svg></span>
        <span class="st-btn"><svg width="18" height="17" viewBox="0 0 18 17"><path d="M3 1v6M0 4h6"/><rect x="6" y="6" width="8" height="8" fill="#cfe8c0"/><rect x="9" y="9" width="8" height="8" fill="#6fb24a" stroke="#2e7a1e"/></svg></span>
        <span class="st-btn"><svg width="16" height="16" viewBox="0 0 16 16" style="stroke:#888"><path d="M6 1h4v5h5v4h-5v5H6v-5H1V6h5z" fill="#fff"/></svg></span>
    </div>

    <!-- annotation -->
    <svg class="mark-up" width="794" height="512" viewBox="0 0 794 512" style="pointer-events:none">
        <ellipse cx="280" cy="23" rx="49" ry="25" stroke="#e6211a" stroke-width="7" fill="none"/>
        <path d="M291 59 306 71 299 73 308 156 289 84 282 87z" fill="#ef1f17" stroke="none"/>
    </svg>

    <!-- watermark -->
    <div class="logo-box d-flex align-items-center">
        <svg class="ms-3" width="34" height="36" viewBox="0 0 34 36" style="stroke:#ccd0d9;stroke-width:3;margin-top:-1px"><path d="M5 5v24c0 4 5 5 8 3l17-11c3-2 3-5 0-7L15 3c-3-2-6 0-6 4v18" stroke-linejoin="round"/><path d="M14 13l8 5-8 5z" fill="#ccd0d9" stroke="none"/><path d="M24 14v8" stroke-width="2"/></svg>
        <div class="logo-txt">
            <div class="logo-zh">溜溜自学</div>
            <div class="logo-en">ZIXUE.3D66.COM</div>
        </div>
    </div>

    <script src="https://cdn.jsdelivr.net/npm/bootstrap@5.3.0/dist/js/bootstrap.bundle.min.js"></script>
</body>
</html>
